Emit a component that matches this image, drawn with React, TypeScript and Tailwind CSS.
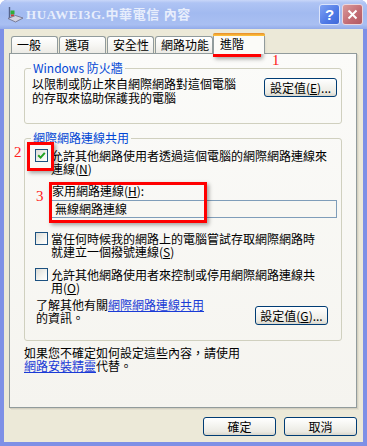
import React from "react";

const FONT = "font-['Noto_Sans_CJK_TC','Noto_Sans_CJK_JP',sans-serif]";

function Btn({ children, className = "" }: { children: React.ReactNode; className?: string }) {
  return (
    <div
      className={`w-[73px] h-[19px] shrink-0 rounded-[3px] border border-[#003c74] bg-[linear-gradient(to_bottom,#ffffff_0%,#f5f5f1_40%,#ebeae3_80%,#d9d6cb_100%)] flex items-center justify-center text-[12px] leading-none text-black ${className}`}
    >
      {children}
    </div>
  );
}

function Check({ checked = false }: { checked?: boolean }) {
  return (
    <div className="w-[13px] h-[13px] shrink-0 border border-[#1c5180] bg-[linear-gradient(135deg,#dcdcd7_0%,#f4f4f0_60%,#ffffff_100%)] flex items-center justify-center">
      {checked && (
        <svg width="9" height="9" viewBox="0 0 9 9">
          <path d="M1.2 4.2 L3.6 6.6 L7.8 1.8" stroke="#21a121" strokeWidth="2" fill="none" />
        </svg>
      )}
    </div>
  );
}

function Tab({ label, w }: { label: string; w: string }) {
  return (
    <div
      className={`${w} h-[17px] mb-[1px] rounded-t-[3px] border border-b-0 border-[#919b9c] bg-[linear-gradient(to_bottom,#ffffff_0%,#f7f7f4_50%,#ecebe5_100%)] pl-[5px] flex items-center text-[12px] leading-none text-black`}
    >
      {label}
    </div>
  );
}

export default function App() {
  return (
    <div className={`relative w-[367px] h-[446px] ${FONT} text-[12px] text-black`}>
      <div className="w-full h-full rounded-t-[7px] bg-[#7e90e6] flex flex-col overflow-hidden">
        {/* Title bar */}
        <div className="h-[29px] shrink-0 bg-[linear-gradient(to_bottom,#c9d7f8_0%,#afc4f4_10%,#a2baf0_45%,#a9bff2_85%,#93abe9_100%)] flex items-center pl-[7px] pr-[4px]">
          <svg width="17" height="17" viewBox="0 0 17 17" className="shrink-0">
            <path d="M2.5 1 V12" stroke="#55648c" strokeWidth="1.4" />
            <rect x="3.5" y="4.5" width="4" height="4" fill="#2fae3a" />
            <rect x="4" y="8.5" width="3" height="2" fill="#d43a30" />
            <path d="M1 12.5 L8.5 16 L16 12 L8.5 9.5 Z" fill="#d2d2e2" stroke="#6b6b84" strokeWidth="0.8" />
          </svg>
          <div className="ml-[2px] text-[13px] font-bold tracking-[0.6px] text-[#e8eefc] font-['Liberation_Serif','Noto_Sans_CJK_TC',serif] whitespace-nowrap">
            HUAWEI3G.中華電信 內容
          </div>
          <div className="flex-1" />
          <div className="w-[21px] h-[21px] rounded-[3px] border border-[#dbe4fb] bg-[linear-gradient(135deg,#7ea1f2_0%,#4e79e6_60%,#3f68d8_100%)] flex items-center justify-center text-white text-[15px] font-bold font-['Liberation_Sans',sans-serif] leading-none">
            ?
          </div>
          <div className="ml-[2px] w-[21px] h-[21px] rounded-[3px] border border-[#ecd6dc] bg-[linear-gradient(135deg,#d99a9c_0%,#c26a72_60%,#b25a63_100%)] flex items-center justify-center">
            <svg width="11" height="11" viewBox="0 0 11 11">
              <path d="M1.5 1.5 L9.5 9.5 M9.5 1.5 L1.5 9.5" stroke="#ffffff" strokeWidth="2" />
            </svg>
          </div>
        </div>

        {/* Body */}
        <div className="flex-1 mx-[4px] mb-[4px] bg-[#ece9d8] pt-[4px] pl-[5px] pr-[6px] flex flex-col">
          {/* Tabs */}
          <div className="relative z-10 h-[21px] -mb-[1px] ml-[2px] flex items-end">
            <Tab label="一般" w="w-[47px]" />
            <div className="w-[1px]" />
            <Tab label="選項" w="w-[47px]" />
            <div className="w-[1px]" />
            <Tab label="安全性" w="w-[47px]" />
            <div className="w-[1px]" />
            <Tab label="網路功能" w="w-[58px]" />
            <div className="w-[52px] h-[21px] rounded-t-[3px] border-x border-[#919b9c] bg-[#fbfbf8] flex flex-col">
              <div className="h-[3px] rounded-t-[2px] bg-[linear-gradient(to_bottom,#e68b2c,#ffc73c)] -mx-[1px]" />
              <div className="pl-[6px] pt-[1px] text-[12px] leading-[13px]">進階</div>
            </div>
          </div>

          {/* Panel */}
          <div className="h-[355px] w-[348px] border border-[#919b9c] bg-[linear-gradient(to_bottom,#fbfbf9_0%,#f5f4ef_100%)] shadow-[1px_1px_0_#d4d0c0,2px_2px_0_#e2dfd0] flex flex-col">
            {/* Group 1 */}
            <div className="relative mt-[14px] mx-[14px] h-[56px] rounded-[3px] border border-[#d0d0bf] flex justify-between pt-[8px] pl-[7px] pr-[4px]">
              <span className="absolute -top-[8px] left-[6px] px-[2px] bg-[#fafaf8] text-[#0046d5] leading-[14px] whitespace-nowrap">
                Windows 防火牆
              </span>
              <div className="leading-[14px] whitespace-nowrap">
                <div>以限制或防止來自網際網路對這個電腦</div>
                <div>的存取來協助保護我的電腦</div>
              </div>
              <Btn className="mt-[1px]">
                設定值(<u>E</u>)...
              </Btn>
            </div>

            {/* Group 2 */}
            <div className="relative mt-[14px] mx-[14px] h-[203px] rounded-[3px] border border-[#d0d0bf] flex flex-col pt-[10px] pl-[10px]">
              <span className="absolute -top-[8px] left-[6px] px-[2px] bg-[#f9f9f6] text-[#0046d5] leading-[14px] whitespace-nowrap">
                網際網路連線共用
              </span>
              <div className="flex items-start">
                <Check checked />
                <div className="ml-[3px] leading-[13px] whitespace-nowrap">
                  <div>允許其他網路使用者透過這個電腦的網際網路連線來</div>
                  <div>
                    連線(<u>N</u>)
                  </div>
                </div>
              </div>
              <div className="mt-[9px] ml-[17px] leading-[13px]">
                家用網路連線(<u>H</u>):
              </div>
              <div className="mt-[3px] ml-[16px] w-[286px] h-[18px] border border-[#7f9db9] bg-[#f8f7f3] pl-[3px] flex items-center leading-none">
                無線網路連線
              </div>
              <div className="mt-[14px] flex items-start">
                <Check />
                <div className="ml-[3px] leading-[13px] whitespace-nowrap">
                  <div>當任何時候我的網路上的電腦嘗試存取網際網路時</div>
                  <div>
                    就建立一個撥號連線(<u>S</u>)
                  </div>
                </div>
              </div>
              <div className="mt-[10px] flex items-start">
                <Check />
                <div className="ml-[3px] leading-[13px] whitespace-nowrap">
                  <div>允許其他網路使用者來控制或停用網際網路連線共</div>
                  <div>
                    用(<u>O</u>)
                  </div>
                </div>
              </div>
              <div className="mt-[4px] ml-[1px] pr-[13px] flex justify-between">
                <div className="leading-[13px] whitespace-nowrap">
                  <div>
                    了解其他有關<span className="text-[#1a3bd6] underline">網際網路連線共用</span>
                  </div>
                  <div>的資訊。</div>
                </div>
                <Btn className="mt-[8px]">
                  設定值(<u>G</u>)...
                </Btn>
              </div>
            </div>

            <div className="mt-[5px] ml-[14px] leading-[13px] whitespace-nowrap">
              <div>如果您不確定如何設定這些內容，請使用</div>
              <div>
                <span className="text-[#1a3bd6] underline">網路安裝精靈</span>代替。
              </div>
            </div>
          </div>

          {/* Bottom buttons */}
          <div className="mt-[9px] flex justify-end gap-[8px]">
            <Btn>確定</Btn>
            <Btn>取消</Btn>
          </div>
        </div>
      </div>

      {/* Annotations */}
      <div className="absolute left-[213px] top-[36px] w-[48px] h-[21px] border-[3px] border-[#ff0000] shadow-[2px_2px_4px_rgba(0,0,0,0.35)]" />
      <div className="absolute left-[272px] top-[53px] text-[#ff2020] text-[15px] leading-none font-['Liberation_Serif',serif]">1</div>
      <div className="absolute left-[27px] top-[142px] w-[27px] h-[29px] border-[3px] border-[#ff0000] shadow-[2px_2px_4px_rgba(0,0,0,0.35)]" />
      <div className="absolute left-[14px] top-[145px] text-[#ff2020] text-[15px] leading-none font-['Liberation_Serif',serif]">2</div>
      <div className="absolute left-[49px] top-[182px] w-[158px] h-[41px] border-[3px] border-[#ff0000] shadow-[2px_2px_4px_rgba(0,0,0,0.35)]" />
      <div className="absolute left-[36px] top-[189px] text-[#ff2020] text-[15px] leading-none font-['Liberation_Serif',serif]">3</div>
    </div>
  );
}
